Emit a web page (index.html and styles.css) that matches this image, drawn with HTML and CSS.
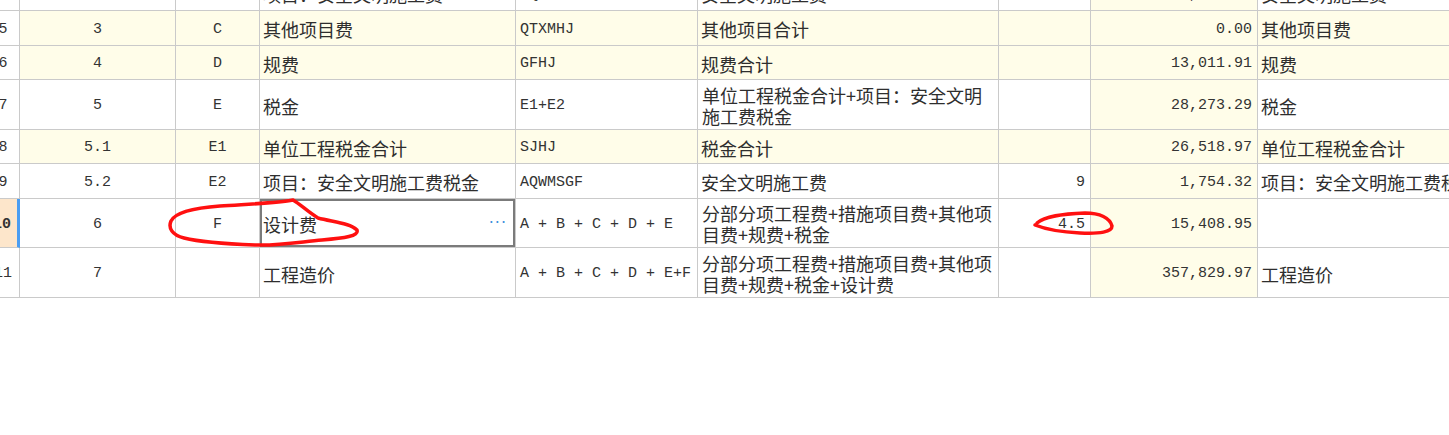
FILE: index.html
```html
<!DOCTYPE html>
<html lang="zh-CN">
<head>
<meta charset="utf-8">
<title>费用汇总</title>
<link rel="stylesheet" href="styles.css">
</head>
<body>
<div class="sheet">
  <!-- row 4 (partially scrolled out) -->
  <div class="c hdr">4</div>
  <div class="c num">2.2</div>
  <div class="c num">B2</div>
  <div class="c zh">项目：安全文明施工费</div>
  <div class="c mono">AQWMSGF</div>
  <div class="c zh">安全文明施工费</div>
  <div class="c r"></div>
  <div class="c r amt">30,972.07</div>
  <div class="c zh">安全文明施工费</div>

  <!-- row 5 -->
  <div class="c hdr">5</div>
  <div class="c num cream">3</div>
  <div class="c num cream">C</div>
  <div class="c zh cream">其他项目费</div>
  <div class="c mono cream">QTXMHJ</div>
  <div class="c zh cream">其他项目合计</div>
  <div class="c r cream"></div>
  <div class="c r amt">0.00</div>
  <div class="c zh cream">其他项目费</div>

  <!-- row 6 -->
  <div class="c hdr">6</div>
  <div class="c num cream">4</div>
  <div class="c num cream">D</div>
  <div class="c zh cream">规费</div>
  <div class="c mono cream">GFHJ</div>
  <div class="c zh cream">规费合计</div>
  <div class="c r cream"></div>
  <div class="c r amt">13,011.91</div>
  <div class="c zh cream">规费</div>

  <!-- row 7 -->
  <div class="c hdr">7</div>
  <div class="c num">5</div>
  <div class="c num">E</div>
  <div class="c zh">税金</div>
  <div class="c mono">E1+E2</div>
  <div class="c zh two">单位工程税金合计+项目：安全文明<br>施工费税金</div>
  <div class="c r"></div>
  <div class="c r amt">28,273.29</div>
  <div class="c zh">税金</div>

  <!-- row 8 -->
  <div class="c hdr">8</div>
  <div class="c num cream">5.1</div>
  <div class="c num cream">E1</div>
  <div class="c zh cream">单位工程税金合计</div>
  <div class="c mono cream">SJHJ</div>
  <div class="c zh cream">税金合计</div>
  <div class="c r cream"></div>
  <div class="c r amt">26,518.97</div>
  <div class="c zh cream">单位工程税金合计</div>

  <!-- row 9 -->
  <div class="c hdr">9</div>
  <div class="c num">5.2</div>
  <div class="c num">E2</div>
  <div class="c zh">项目：安全文明施工费税金</div>
  <div class="c mono">AQWMSGF</div>
  <div class="c zh">安全文明施工费</div>
  <div class="c r">9</div>
  <div class="c r amt">1,754.32</div>
  <div class="c zh">项目：安全文明施工费税金</div>

  <!-- row 10 (active) -->
  <div class="c hdr active">10</div>
  <div class="c num">6</div>
  <div class="c num">F</div>
  <div class="c zh sel"><span class="grow">设计费</span><span class="more">···</span></div>
  <div class="c mono">A + B + C + D + E</div>
  <div class="c zh two">分部分项工程费+措施项目费+其他项<br>目费+规费+税金</div>
  <div class="c r">4.5</div>
  <div class="c r amt">15,408.95</div>
  <div class="c zh"></div>

  <!-- row 11 -->
  <div class="c hdr">11</div>
  <div class="c num">7</div>
  <div class="c num"></div>
  <div class="c zh">工程造价</div>
  <div class="c mono">A + B + C + D + E+F</div>
  <div class="c zh two">分部分项工程费+措施项目费+其他项<br>目费+规费+税金+设计费</div>
  <div class="c r"></div>
  <div class="c r amt">357,829.97</div>
  <div class="c zh">工程造价</div>
</div>

<svg class="ink" width="1449" height="435" viewBox="0 0 1449 435">
  <path d="M293,200 C300,204 308,212 318,218 C333,222 350,223 357,230 C359,236 345,238 322,240 C300,242 278,246 255,245 C228,244 200,242 184,238 C172,235 168,228 171,221 C175,213 192,208 220,206 C250,204 278,203 293,200" />
  <path d="M1037,223 C1045,216 1062,214 1085,213 C1100,213 1110,218 1112,226 C1112,232 1100,234 1080,233 C1060,232 1045,229 1035,225" />
</svg>
</body>
</html>
```
FILE: styles.css
```css
html, body {
  margin: 0;
  padding: 0;
  background: #ffffff;
  overflow: hidden;
  width: 1449px;
  height: 435px;
}

body {
  position: relative;
  font-family: "Liberation Mono", "DejaVu Sans Mono", monospace;
  color: #333333;
}

.sheet {
  display: grid;
  grid-template-columns: 33px 156px 84px 256px 182px 301px 92px 167px 242px;
  grid-template-rows: 35px 35px 34px 50px 34px 35px 49px 50px;
  margin-top: -24px;
  margin-left: -13px;
  width: max-content;
}

.c {
  box-sizing: border-box;
  border-right: 1px solid #cacaca;
  border-bottom: 1px solid #cacaca;
  display: flex;
  align-items: center;
  padding-top: 3px;
  white-space: pre;
  overflow: hidden;
  font-family: "Liberation Mono", "DejaVu Sans Mono", monospace;
  font-size: 15px;
  line-height: 18px;
  background: #ffffff;
}

.hdr {
  justify-content: center;
  color: #333;
}

.hdr.active {
  background: #fde6cb;
  font-weight: bold;
  border-right: 3px solid #4a9df2;
}

.num {
  justify-content: center;
}

.mono {
  padding-left: 4px;
}

.zh {
  font-family: "Noto Sans CJK SC", "Noto Sans", sans-serif;
  font-size: 18px;
  line-height: 21px;
  padding-left: 3px;
  color: #2e2e2e;
}

.two {
  padding-left: 4px;
  line-height: 21px;
  padding-top: 2px;
}

.r {
  justify-content: flex-end;
  padding-right: 5px;
}

.amt {
  background: #fffde9;
}

.cream {
  background: #fffde9;
}

.sel {
  box-shadow: inset 0 0 0 2px #7b7b7b;
  padding-right: 8px;
}

.grow {
  flex: 1;
}

.more {
  font-family: "DejaVu Sans", sans-serif;
  font-size: 16px;
  color: #3d8fdc;
  letter-spacing: 1px;
  padding-bottom: 4px;
}

.ink {
  position: absolute;
  left: 0;
  top: 0;
  pointer-events: none;
}

.ink path {
  fill: none;
  stroke: #ff1010;
  stroke-width: 3.5;
  stroke-linecap: round;
  stroke-linejoin: round;
}
```
